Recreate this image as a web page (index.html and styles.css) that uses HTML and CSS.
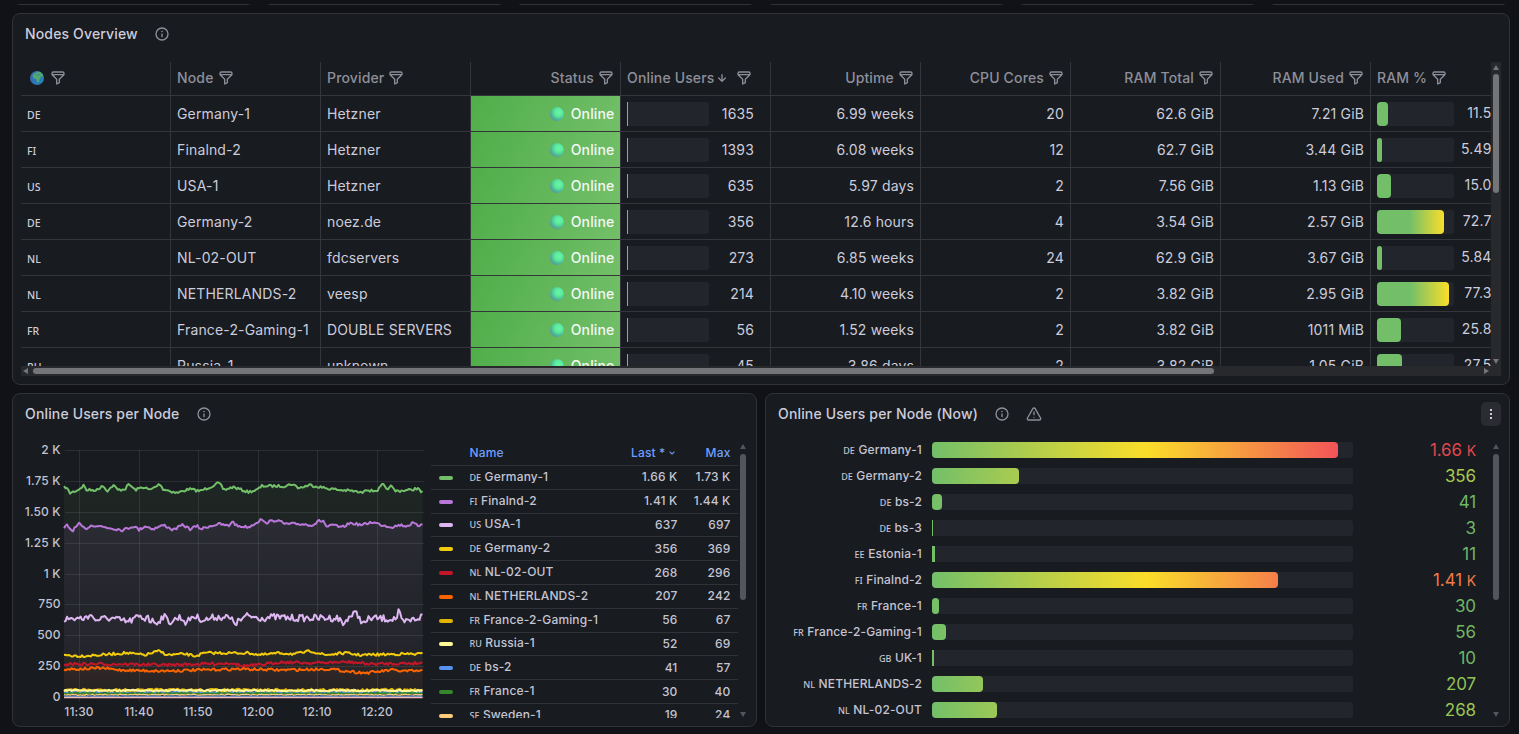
FILE: index.html
```html
<!DOCTYPE html>
<html lang="en">
<head>
<meta charset="utf-8">
<title>Nodes</title>
<link rel="stylesheet" href="styles.css">
</head>
<body>
<svg class="defs" width="0" height="0">
  <defs>
    <symbol id="i-filter" viewBox="0 0 24 24"><path d="M19,2H5A3,3,0,0,0,2,5V6.17a3,3,0,0,0,.25,1.2l0,.06a2.81,2.81,0,0,0,.59.86L9,14.41V21a1,1,0,0,0,.47.85A1,1,0,0,0,10,22a1,1,0,0,0,.45-.11l4-2A1,1,0,0,0,15,19V14.41l6.12-6.12a2.81,2.81,0,0,0,.59-.86l0-.06A3,3,0,0,0,22,6.17V5A3,3,0,0,0,19,2ZM13.29,13.29A1,1,0,0,0,13,14v4.38l-2,1V14a1,1,0,0,0-.29-.71L5.41,8H18.59ZM20,6H4V5A1,1,0,0,1,5,4H19a1,1,0,0,1,1,1Z"/></symbol>
    <symbol id="i-info" viewBox="0 0 24 24"><path d="M12,2A10,10,0,1,0,22,12,10,10,0,0,0,12,2Zm0,18a8,8,0,1,1,8-8A8,8,0,0,1,12,20Zm0-9a1,1,0,0,0-1,1v4a1,1,0,0,0,2,0V12A1,1,0,0,0,12,11Zm0-4a1.25,1.25,0,1,0,1.25,1.25A1.25,1.25,0,0,0,12,7Z"/></symbol>
    <symbol id="i-warn" viewBox="0 0 24 24"><path d="M12,16a1,1,0,1,0,1,1A1,1,0,0,0,12,16Zm10.67,1.47-8.05-14a3,3,0,0,0-5.24,0l-8,14A3,3,0,0,0,3.94,22H20.06a3,3,0,0,0,2.61-4.53Zm-1.73,2a1,1,0,0,1-.88.51H3.94a1,1,0,0,1-.88-.51,1,1,0,0,1,0-1l8-14a1,1,0,0,1,1.78,0l8.05,14A1,1,0,0,1,20.94,19.49ZM12,8a1,1,0,0,0-1,1v4a1,1,0,0,0,2,0V9A1,1,0,0,0,12,8Z"/></symbol>
    <symbol id="i-arrow" viewBox="0 0 24 24"><path d="M17.71,11.29a1,1,0,0,0-1.42,0L13,14.59V7a1,1,0,0,0-2,0v7.59l-3.29-3.3a1,1,0,0,0-1.42,1.42l5,5a1,1,0,0,0,.33.21.94.94,0,0,0,.76,0,1,1,0,0,0,.33-.21l5-5A1,1,0,0,0,17.71,11.29Z"/></symbol>
    <symbol id="i-angle" viewBox="0 0 24 24"><path d="M17,9.17a1,1,0,0,0-1.41,0L12,12.71,8.46,9.17a1,1,0,0,0-1.41,0,1,1,0,0,0,0,1.42l4.24,4.24a1,1,0,0,0,1.42,0L17,10.59A1,1,0,0,0,17,9.17Z"/></symbol>
    <linearGradient id="sea" x1="0" y1="0" x2="1" y2="0.6"><stop offset="0" stop-color="#3a62b4"/><stop offset="1" stop-color="#2484b5"/></linearGradient>
    <symbol id="i-globe" viewBox="0 0 14 14"><circle cx="7" cy="7" r="7" fill="url(#sea)"/><path fill="#4fa870" d="M2.6 4.2 4 2.6 6.4 1.6 7.6.6 10.6 1.2 12.4 3 13.2 5.2 12 6 10.6 5 10.8 6.6 9.6 8.2 9.4 10 7.8 12 6.8 10.6 6.4 8.2 4 7.6 3 6.2Z"/><path fill="#3a7fb0" d="M6.2 3.6 9.6 3.2 10 4.2 7 4.4Z"/></symbol>
  </defs>
</svg>
<div class="page">
  <div class="strip"><div class="stub"></div><div class="stub"></div><div class="stub"></div><div class="stub"></div><div class="stub"></div><div class="stub"></div></div>

  <section class="panel overview">
    <header class="head"><h2>Nodes Overview</h2><svg class="ic"><use href="#i-info"/></svg></header>
    <div class="scroller">
      <div class="view" id="nodes">
        <div class="tr th">
          <div class="td"><svg class="globe"><use href="#i-globe"/></svg><svg class="ic"><use href="#i-filter"/></svg></div>
          <div class="td">Node<svg class="ic"><use href="#i-filter"/></svg></div>
          <div class="td">Provider<svg class="ic"><use href="#i-filter"/></svg></div>
          <div class="td r">Status<svg class="ic"><use href="#i-filter"/></svg></div>
          <div class="td">Online Users<svg class="ic sort"><use href="#i-arrow"/></svg><svg class="ic"><use href="#i-filter"/></svg></div>
          <div class="td r">Uptime<svg class="ic"><use href="#i-filter"/></svg></div>
          <div class="td r">CPU Cores<svg class="ic"><use href="#i-filter"/></svg></div>
          <div class="td r">RAM Total<svg class="ic"><use href="#i-filter"/></svg></div>
          <div class="td r">RAM Used<svg class="ic"><use href="#i-filter"/></svg></div>
          <div class="td last">RAM %<svg class="ic"><use href="#i-filter"/></svg></div>
        </div>
      </div>
      <div class="sb sb-v"><i class="up"></i><b></b><i class="down"></i></div>
      <div class="sb sb-h"><i class="left"></i><b></b><i class="right"></i></div>
    </div>
  </section>

  <div class="row">
    <section class="panel">
      <header class="head"><h2>Online Users per Node</h2><svg class="ic"><use href="#i-info"/></svg></header>
      <div class="ts">
        <svg class="chart" id="chart" width="412" height="292" viewBox="13 434 412 292"></svg>
        <div class="legend" id="legend">
          <div class="lr lh"><span class="nm">Name</span><span class="v1">Last *<svg class="an"><use href="#i-angle"/></svg></span><span class="v2">Max</span></div>
        </div>
        <div class="thin leg"><i class="up"></i><b></b><i class="down"></i></div>
      </div>
    </section>
    <section class="panel">
      <header class="head"><h2>Online Users per Node (Now)</h2><svg class="ic"><use href="#i-info"/></svg><svg class="ic warn"><use href="#i-warn"/></svg><span class="menu"><u></u><u></u><u></u></span></header>
      <div class="bg">
        <div class="bars" id="bars"></div>
        <div class="thin"><i class="up"></i><b></b><i class="down"></i></div>
      </div>
    </section>
  </div>
</div>
<script src="app.js"></script>
</body>
</html>
```

FILE: styles.css
```css
* { box-sizing: border-box; }
body { margin: 0; background: #111217; color: #ccccdc; font: 14px/22px Inter, "Liberation Sans", sans-serif; letter-spacing: 0.15px; width: 1519px; height: 734px; overflow: hidden; }
.defs { position: absolute; }
.page { padding: 4px 9px 0 12px; display: flex; flex-direction: column; width: 1519px; }
.strip { display: flex; gap: 8px; height: 1px; width: 1498px; align-items: flex-end; overflow: hidden; margin-bottom: 8px; }
.stub { flex: 1; height: 40px; background: #181b1f; border: 1px solid #303238; border-radius: 8px; }
.panel { background: #181b1f; border: 1px solid #303238; border-radius: 8px; overflow: hidden; }
.overview { height: 372px; width: 1498px; margin-bottom: 8px; }
.row { display: flex; gap: 8px; width: 1498px; }
.row .panel { width: 745px; height: 334px; }
.head { display: flex; align-items: center; height: 40px; padding: 0 8px 0 12px; }
.head h2 { margin: 0 16px 0 0; font-size: 14px; font-weight: 500; line-height: 22px; white-space: nowrap; }
.ic { width: 16px; height: 16px; fill: #8e8f9b; flex: none; }
.warn { margin-left: 16px; }
.menu { margin-left: auto; width: 20px; height: 24px; border-radius: 5px; background: #2a2c32; display: flex; flex-direction: column; align-items: center; justify-content: center; gap: 2px; }
.menu u { width: 2px; height: 2px; background: #ccccdc; }

.scroller { display: grid; grid-template-columns: 1470px 10px; grid-template-rows: 304px 10px; margin: 8px 0 0 8px; }
.view { overflow: hidden; }
.tr { display: flex; height: 36px; border-bottom: 1px solid #34363c; }
.th { height: 34px; font-weight: 500; color: #8e8f9b; }
.th .td { padding-bottom: 1px; }
.td { width: 150px; border-right: 1px solid #34363c; padding: 0 6px; display: flex; align-items: center; white-space: nowrap; flex: none; }
.td.last { width: 120px; border-right: 0; padding-right: 0; }
.td.r { justify-content: flex-end; }
.th .td > .ic { margin-left: 4px; }
.th .sort { margin: 0 !important; }
.th .sort + .ic { margin-left: 6px; }
.globe { width: 14px; height: 14px; margin: 0 2px 0 3px; }
.cc { font-family: "Noto Sans", sans-serif; font-size: 10.5px; font-weight: 500; letter-spacing: 0; padding-top: 2px; }
.ok { background: linear-gradient(120deg, #4fae49, #73bf69); color: #f4f8f6; font-weight: 500; padding-right: 5.5px; }
.orb { width: 14px; height: 14px; border-radius: 50%; margin-right: 7px; background: radial-gradient(circle at 62% 38%, #68f8a2 0, #5ceaa0 30%, #4cc091 56%, #5a90a8 76%); }
.track { background: #22252b; border-radius: 3px; height: 24px; flex: none; }
.users { width: 82px; border-left: 1px solid #73bf69; border-radius: 0 3px 3px 0; }
.num { flex: 1; text-align: right; padding-right: 10px; }
.ram { width: 77px; }
.ram div { height: 24px; border-radius: 4px; background: linear-gradient(to right, #73bf69 0 33px, #fade2a 100%); }
.pct { flex: 1; text-align: right; padding-bottom: 1px; margin-right: -0.5px; }

.sb { background: #27292d; display: flex; align-items: center; }
.sb b { background: #747578; border-radius: 3px; display: block; }
.sb-v { flex-direction: column; padding-top: 3px; }
.sb-v b { width: 6px; height: 119px; margin-top: 4px; }
.sb-h { grid-column: 1 / 3; padding-left: 2px; }
.sb-h b { height: 6px; width: 1181px; margin-left: 5px; }
i { width: 0; height: 0; display: block; border: 3px solid transparent; flex: none; }
.up { border-bottom: 5px solid #747578; border-top: 0; }
.down { border-top: 5px solid #747578; border-bottom: 0; margin-top: auto; margin-bottom: 2px; }
.left { border-right: 5px solid #747578; border-left: 0; }
.right { border-left: 5px solid #747578; border-right: 0; margin-left: auto; margin-right: 12px; }

.ts { display: flex; }
.chart { flex: none; }
.chart text { font-size: 12px; font-weight: 500; fill: #c2c2d1; letter-spacing: 0.1px; }
.legend { width: 307px; height: 278px; margin: 6px 0 0 6px; overflow: hidden; font-size: 12px; font-weight: 500; line-height: 18px; flex: none; color: #c4c4d3; }
.lr { display: grid; grid-template-columns: 38.5px 126px 82px 53px; height: 23.8px; border-bottom: 1px solid #303238; align-items: center; white-space: nowrap; }
.lh { height: 26px; color: #6e9fff; }
.lh .nm { grid-column: 2; }
.lh .v1 { display: flex; justify-content: flex-end; align-items: center; }
.an { width: 12px; height: 12px; fill: #6e9fff; }
.sw { width: 14px; height: 4px; border-radius: 2px; margin-left: 8px; margin-top: 1px; }
.v1, .v2 { text-align: right; }
.fc { font-family: "Noto Sans", sans-serif; font-size: 9px; letter-spacing: 0; margin-right: 3.5px; }
.thin { width: 6px; height: 275px; margin-top: 10px; display: flex; flex-direction: column; align-items: center; }
.thin b { width: 6px; height: 146px; border-radius: 3px; background: #53555c; margin-top: 5px; }
.thin .up { border-bottom-color: #53555c; }
.thin .down { border-top-color: #53555c; }
.leg { margin-left: 2px; }

.bg { display: flex; }
.bars { width: 711px; padding-top: 8px; margin-top: -1px; display: flex; flex-direction: column; gap: 10px; }
.bar { display: grid; grid-template-columns: 156px 421px 113px; column-gap: 10px; align-items: center; height: 16px; }
.bar .lb { text-align: right; font-size: 12px; font-weight: 500; white-space: nowrap; color: #c4c4d3; line-height: 16px; padding-top: 1px; }
.bar .tk { height: 16px; border-radius: 3px; background: #22252b; }
.bar .fill { height: 16px; border-radius: 4px; background: linear-gradient(to right, #73bf69, #fade2a 214px, #f2495c 421px); }
.bar .vl { text-align: right; font-size: 17px; line-height: 16px; letter-spacing: -0.1px; }
.vl small { font-size: 14px; }
.bg .thin { margin-left: 16px; }
```

FILE: app.js
```js
const nodes = [
  ['DE', 'Germany-1', 'Hetzner', '1635', '6.99 weeks', '20', '62.6 GiB', '7.21 GiB', 11, '11.5'],
  ['FI', 'Finalnd-2', 'Hetzner', '1393', '6.08 weeks', '12', '62.7 GiB', '3.44 GiB', 5, '5.49'],
  ['US', 'USA-1', 'Hetzner', '635', '5.97 days', '2', '7.56 GiB', '1.13 GiB', 14, '15.0'],
  ['DE', 'Germany-2', 'noez.de', '356', '12.6 hours', '4', '3.54 GiB', '2.57 GiB', 67, '72.7'],
  ['NL', 'NL-02-OUT', 'fdcservers', '273', '6.85 weeks', '24', '62.9 GiB', '3.67 GiB', 5, '5.84'],
  ['NL', 'NETHERLANDS-2', 'veesp', '214', '4.10 weeks', '2', '3.82 GiB', '2.95 GiB', 72, '77.3'],
  ['FR', 'France-2-Gaming-1', 'DOUBLE SERVERS', '56', '1.52 weeks', '2', '3.82 GiB', '1011 MiB', 24, '25.8'],
  ['RU', 'Russia-1', 'unknown', '45', '3.86 days', '2', '3.82 GiB', '1.05 GiB', 25, '27.5'],
];
document.getElementById('nodes').insertAdjacentHTML('beforeend', nodes.map(n => `
<div class="tr"><div class="td"><span class="cc">${n[0]}</span></div><div class="td">${n[1]}</div><div class="td">${n[2]}</div>
<div class="td r ok"><span class="orb"></span>Online</div>
<div class="td"><div class="track users"></div><span class="num">${n[3]}</span></div>
<div class="td r">${n[4]}</div><div class="td r">${n[5]}</div><div class="td r">${n[6]}</div><div class="td r">${n[7]}</div>
<div class="td last"><div class="track ram"><div style="width:${n[8]}px"></div></div><span class="pct">${n[9]}</span></div></div>`).join(''));

const legend = [
  ['#73BF69', 'DE', 'Germany-1', '1.66 K', '1.73 K'], ['#B877D9', 'FI', 'Finalnd-2', '1.41 K', '1.44 K'],
  ['#DEB6F2', 'US', 'USA-1', '637', '697'], ['#F2CC0C', 'DE', 'Germany-2', '356', '369'],
  ['#C4162A', 'NL', 'NL-02-OUT', '268', '296'], ['#FA6400', 'NL', 'NETHERLANDS-2', '207', '242'],
  ['#E0B400', 'FR', 'France-2-Gaming-1', '56', '67'], ['#FFF899', 'RU', 'Russia-1', '52', '69'],
  ['#5794F2', 'DE', 'bs-2', '41', '57'], ['#37872D', 'FR', 'France-1', '30', '40'],
  ['#FFCB7D', 'SE', 'Sweden-1', '19', '24'],
];
document.getElementById('legend').insertAdjacentHTML('beforeend', legend.map(l =>
  `<div class="lr"><span class="sw" style="background:${l[0]}"></span><span class="nm"><span class="fc">${l[1]}</span>${l[2]}</span><span class="v1">${l[3]}</span><span class="v2">${l[4]}</span></div>`).join(''));

const bars = [
  ['DE', 'Germany-1', '1.66', 406, '#E0484F'], ['DE', 'Germany-2', '356', 87, '#A9CB4F'], ['DE', 'bs-2', '41', 10, '#6FB766'],
  ['DE', 'bs-3', '3', 1, '#6FB766'], ['EE', 'Estonia-1', '11', 3, '#6FB766'], ['FI', 'Finalnd-2', '1.41', 346, '#EE7B48'],
  ['FR', 'France-1', '30', 7, '#6FB766'], ['FR', 'France-2-Gaming-1', '56', 14, '#72B863'], ['GB', 'UK-1', '10', 2, '#6FB766'],
  ['NL', 'NETHERLANDS-2', '207', 51, '#8FC257'], ['NL', 'NL-02-OUT', '268', 65, '#98C654'],
];
document.getElementById('bars').innerHTML = bars.map(b =>
  `<div class="bar"><span class="lb"><span class="fc">${b[0]}</span>${b[1]}</span><div class="tk"><div class="fill" style="width:${b[3]}px${b[3] < 4 ? ';border-radius:0' : ''}"></div></div><span class="vl" style="color:${b[4]}">${b[2]}${b[2].includes('.') ? ' <small>K</small>' : ''}</span></div>`).join('');

// Time series: anchors are [x, y] pairs in plot pixels, jitter is added between them
let seed = 7;
const rnd = () => (seed = (seed * 16807) % 2147483647) / 2147483647 - 0.5;
const flat = (y) => [[64, y], [423, y]];
const series = [
  ['#73BF69', 2, [[64, 487.5], [66, 487], [70, 493], [78, 490], [84, 485], [86, 490], [98, 490], [102, 485], [108, 491], [113, 485], [118, 490], [125, 489], [129, 484], [135, 490], [143, 487], [150, 490], [160, 484], [163, 489], [177, 493], [189, 489], [200, 491], [210, 487], [219, 483], [224, 490], [233, 487], [248, 492], [257, 490], [262, 486], [272, 486], [285, 486], [292, 484], [299, 488], [310, 485], [325, 488], [340, 490], [353, 491], [362, 493], [365, 489], [372, 491], [378, 490], [383, 484], [387, 491], [390, 485], [395, 491], [410, 490], [418, 488], [421, 493], [423, 490]], 0.07],
  ['#B877D9', 2, [[64, 529], [67, 525], [72, 531], [79, 524], [85, 529], [92, 525], [110, 528], [123, 530], [134, 526], [139, 530], [145, 526], [153, 529], [164, 525], [173, 530], [183, 525], [190, 529], [197, 526], [201, 529], [210, 526], [219, 524], [229, 526], [232, 521], [237, 526], [249, 527], [262, 519], [264, 523], [277, 520], [285, 524], [300, 524], [313, 525], [319, 521], [324, 521], [326, 527], [335, 525], [341, 528], [350, 523], [362, 525], [372, 522], [382, 525], [392, 527], [400, 525], [407, 526], [413, 523], [418, 526], [423, 523]], 0.09],
  ['#DEB6F2', 5.4, [[64, 619], [88, 618], [91, 612], [94, 620], [110, 618], [128, 622], [138, 617], [145, 619], [147, 613], [150, 621], [158, 622], [163, 616], [170, 622], [180, 617], [187, 623], [192, 616], [205, 620], [215, 617], [227, 617], [236, 623], [247, 616], [262, 618], [275, 617], [290, 618], [320, 618], [338, 618], [344, 625], [347, 618], [356, 613], [364, 624], [370, 618], [390, 619], [397, 618], [399, 611], [402, 623], [412, 620], [423, 616]], 0.03],
  ['#F2CC0C', 2, [[64, 655], [80, 656], [100, 655], [125, 653], [145, 655], [159, 651], [168, 655], [185, 654], [195, 656], [205, 653], [250, 653], [260, 655], [280, 653], [295, 654], [311, 651], [325, 655], [345, 653], [360, 655], [400, 654], [423, 654]], 0.03],
  ['#C4162A', 2.2, [[64, 664], [120, 664], [165, 665], [200, 664], [235, 663], [240, 666], [260, 665], [280, 662], [312, 663], [350, 662], [370, 664], [423, 663]], 0.03],
  ['#FA6400', 2, [[64, 669], [80, 669], [101, 668], [120, 670], [160, 671], [200, 670], [240, 669], [280, 670], [330, 669], [345, 671], [366, 673], [392, 670], [400, 671], [423, 671]], 0.03],
  ['#5794F2', 1.4, flat(692)], ['#37872D', 1, flat(693.5)], ['#E0B400', 2, flat(690)], ['#FFF899', 1.2, flat(690.5)],
  ['#FFCB7D', 0.8, flat(694.8)], ['#447EBC', 0.6, flat(696.3)], ['#F9BDBD', 0, flat(697.5)],
];
const at = (pts, x) => {
  let i = 1;
  while (i < pts.length - 1 && pts[i][0] < x) i++;
  const [a, b] = [pts[i - 1], pts[i]];
  return a[1] + (b[1] - a[1]) * (x - a[0]) / (b[0] - a[0]);
};
let svg = '', defs = '';
['2 K', '1.75 K', '1.50 K', '1.25 K', '1 K', '750', '500', '250', '0'].forEach((t, i) => {
  const y = Math.round(450 + i * 30.875);
  svg += `<text x="60.5" y="${y + 4}" text-anchor="end">${t}</text>`;
});
const draws = series.map(([c, j, pts, fill], k) => {
  const p = [];
  for (let x = 64; x <= 422.5; x += 1.5) p.push(`${x},${(at(pts, x) + rnd() * j * 1.3).toFixed(1)}`);
  const line = 'M' + p.join('L');
  let area = '';
  if (fill) {
    defs += `<linearGradient id="a${k}" x1="0" y1="0" x2="0" y2="1"><stop offset="0" stop-color="${c}" stop-opacity="${fill}"/><stop offset="1" stop-color="${c}" stop-opacity="0.01"/></linearGradient>`;
    area = `<path d="${line}V697H64Z" fill="url(#a${k})"/>`;
  }
  return area + `<path d="${line}" fill="none" stroke="${c}" stroke-width="${k > 9 ? 1.4 : 2}" stroke-linejoin="round"/>`;
});
for (let i = 0; i < 9; i++) {
  const y = Math.round(450 + i * 30.875);
  svg += `<rect x="65" y="${y}" width="359" height="1" fill="#f0faff" fill-opacity=".09"/>`;
}
['11:30', '11:40', '11:50', '12:00', '12:10', '12:20'].forEach((t, i) => {
  const x = Math.round(79 + i * 59.6);
  svg += `<rect x="${x}" y="450" width="1" height="251" fill="#f0faff" fill-opacity=".09"/><text x="${x}" y="716" text-anchor="middle">${t}</text>`;
});
document.getElementById('chart').innerHTML = `<defs>${defs}</defs>${svg}${draws.join('')}`;
```
